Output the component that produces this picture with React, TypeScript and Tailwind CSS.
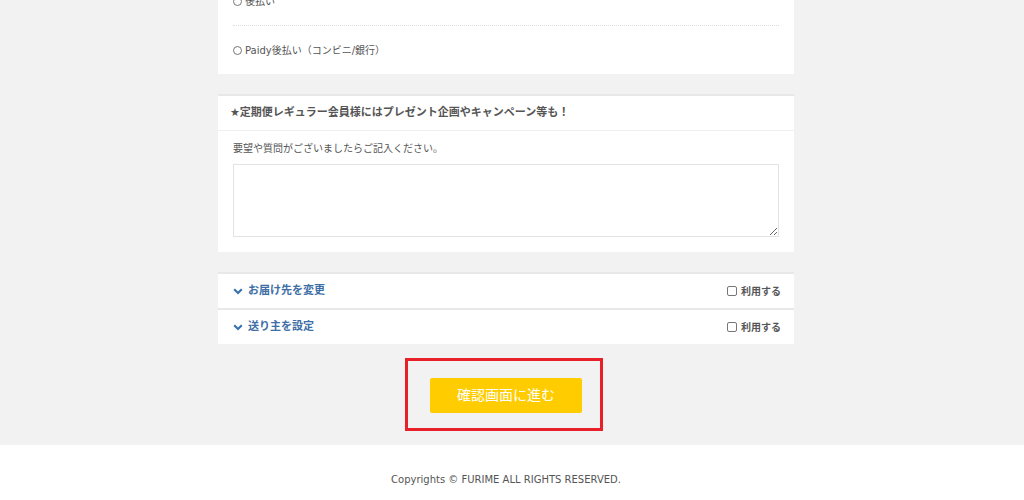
import React from 'react';

const jp = { fontFamily: '"DejaVu Sans", "Noto Sans CJK JP", sans-serif' };

const Chevron = () => (
  <svg width="10" height="7" viewBox="0 0 10 7" className="shrink-0">
    <path d="M1.2 1.3 L5 5 L8.8 1.3" fill="none" stroke="#3a72b0" strokeWidth="2.2" />
  </svg>
);

const Radio = ({ label }: { label: string }) => (
  <label className="flex items-center gap-[3px] text-[10px] text-[#555]">
    <span className="w-[9px] h-[9px] rounded-full border border-[#777] bg-white" />
    {label}
  </label>
);

const Option = ({ title }: { title: string }) => (
  <div className="bg-white border-t-2 border-[#e8e8e8] h-[36px] flex items-center pl-[15px] pr-[13px]">
    <Chevron />
    <span className="ml-[5px] text-[11px] font-bold text-[#3d6ea6]">{title}</span>
    <label className="ml-auto flex items-center gap-[4px] text-[10px] font-bold text-[#555]">
      <span className="w-[10px] h-[10px] rounded-[2px] border border-[#777] bg-white" />
      利用する
    </label>
  </div>
);

export default function App() {
  return (
    <div className="bg-[#f2f2f2] h-[500px] overflow-hidden flex flex-col" style={jp}>
      <div className="w-[576px] ml-[218px]">
        {/* payment options (tail) */}
        <div className="bg-white -mt-[22px] px-[15px]">
          <div className="h-[48px] flex items-center border-b border-dotted border-[#dcdcdc]">
            <Radio label="後払い" />
          </div>
          <div className="h-[48px] flex items-center">
            <Radio label="Paidy後払い（コンビニ/銀行）" />
          </div>
        </div>

        {/* request */}
        <div className="bg-white mt-[20px] border-t-2 border-[#e8e8e8]">
          <div className="h-[35px] flex items-center px-[12px] border-b border-[#efefef] text-[11px] font-bold text-[#555]">
            ★定期便レギュラー会員様にはプレゼント企画やキャンペーン等も！
          </div>
          <div className="px-[15px] pt-[11px] pb-[15px]">
            <p className="text-[10px] text-[#555] leading-[14px]">要望や質問がございましたらご記入ください。</p>
            <textarea className="mt-[8px] block w-full h-[73px] border border-[#e3e3e3] bg-white resize-y" />
          </div>
        </div>

        {/* options */}
        <div className="mt-[20px] flex flex-col">
          <Option title="お届け先を変更" />
          <Option title="送り主を設定" />
        </div>

        {/* submit */}
        <div className="mt-[14px] flex justify-center">
          <div className="ml-[-4px] w-[198px] h-[73px] border-[3px] border-[#e8202a] flex items-center justify-center">
            <button className="ml-[4px] mt-[1px] w-[152px] h-[35px] bg-[#ffcc00] rounded-[2px] text-white text-[14px]">
              確認画面に進む
            </button>
          </div>
        </div>
      </div>

      <footer className="mt-[14px] bg-white flex-1 flex justify-center pt-[27px]">
        <span className="mr-[12px] text-[10px] text-[#555]">Copyrights © FURIME ALL RIGHTS RESERVED.</span>
      </footer>
    </div>
  );
}
